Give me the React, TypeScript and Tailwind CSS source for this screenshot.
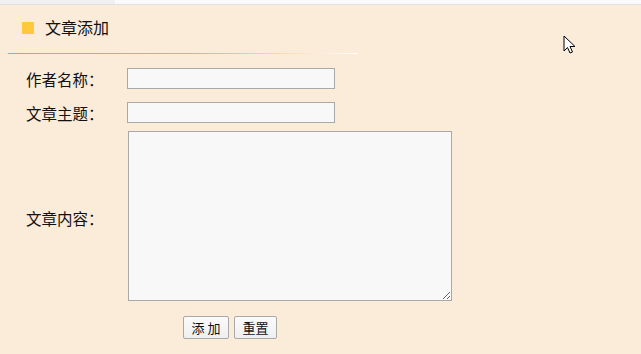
import React from "react";

export default function App() {
  return (
    <div
      className="w-[641px] h-[354px] overflow-hidden relative bg-[#fbebd9] text-[#111]"
      style={{ fontFamily: '"Noto Sans CJK SC", "Microsoft YaHei", sans-serif' }}
    >
      <div className="h-[4px] bg-[#fafafa] flex">
        <div className="w-[115px] bg-[#f0f0f0]" />
      </div>
      <div className="h-[1px] bg-[#e2e2e2]" />
      <div className="h-[48px] flex items-center pl-[22px]">
        <div className="w-[12px] h-[12px] bg-[#ffc83d] mt-[-2px]" />
        <span className="ml-[11px] text-[16px] leading-none mt-[-4px]">文章添加</span>
      </div>
      <div className="ml-[8px] w-[350px] h-[1px] bg-[linear-gradient(to_right,#f19a3e,#f3a851_50%,#ffffff)]" />
      <div className="pt-[14px]">
        <div className="flex items-center h-[21px]">
          <label className="w-[127px] pl-[26px] text-[15.5px] leading-none mt-[2px]">作者名称：</label>
          <input className="w-[208px] h-[21px] border border-[#a9a9a9] bg-[#f8f8f8] outline-none" />
        </div>
        <div className="flex items-center h-[21px] mt-[13px]">
          <label className="w-[127px] pl-[26px] text-[15.5px] leading-none mt-[2px]">文章主题：</label>
          <input className="w-[208px] h-[21px] border border-[#a9a9a9] bg-[#f8f8f8] outline-none" />
        </div>
        <div className="flex items-center mt-[8px]">
          <label className="w-[128px] pl-[26px] text-[15.5px] leading-none mt-[6px]">文章内容：</label>
          <textarea className="w-[324px] h-[170px] border border-[#a9a9a9] bg-[#f8f8f8] outline-none block resize-y" />
        </div>
        <div className="flex mt-[15px] pl-[183px] gap-[5px]">
          <button className="w-[46px] h-[23px] border border-[#a9a9a9] rounded-[2px] bg-gradient-to-b from-[#fbfbfb] to-[#efefef] text-[13px] leading-none">添 加</button>
          <button className="w-[43px] h-[23px] border border-[#a9a9a9] rounded-[2px] bg-gradient-to-b from-[#fbfbfb] to-[#efefef] text-[13px] leading-none">重置</button>
        </div>
      </div>
      <svg className="absolute left-[563px] top-[35px]" width="14" height="20" viewBox="0 0 14 20">
        <path d="M1 1 L1 16 L4.5 12.5 L7 18 L9.5 17 L7 11.5 L12 11.5 Z" fill="#fff" stroke="#000" strokeWidth="1" strokeLinejoin="round" />
      </svg>
    </div>
  );
}
